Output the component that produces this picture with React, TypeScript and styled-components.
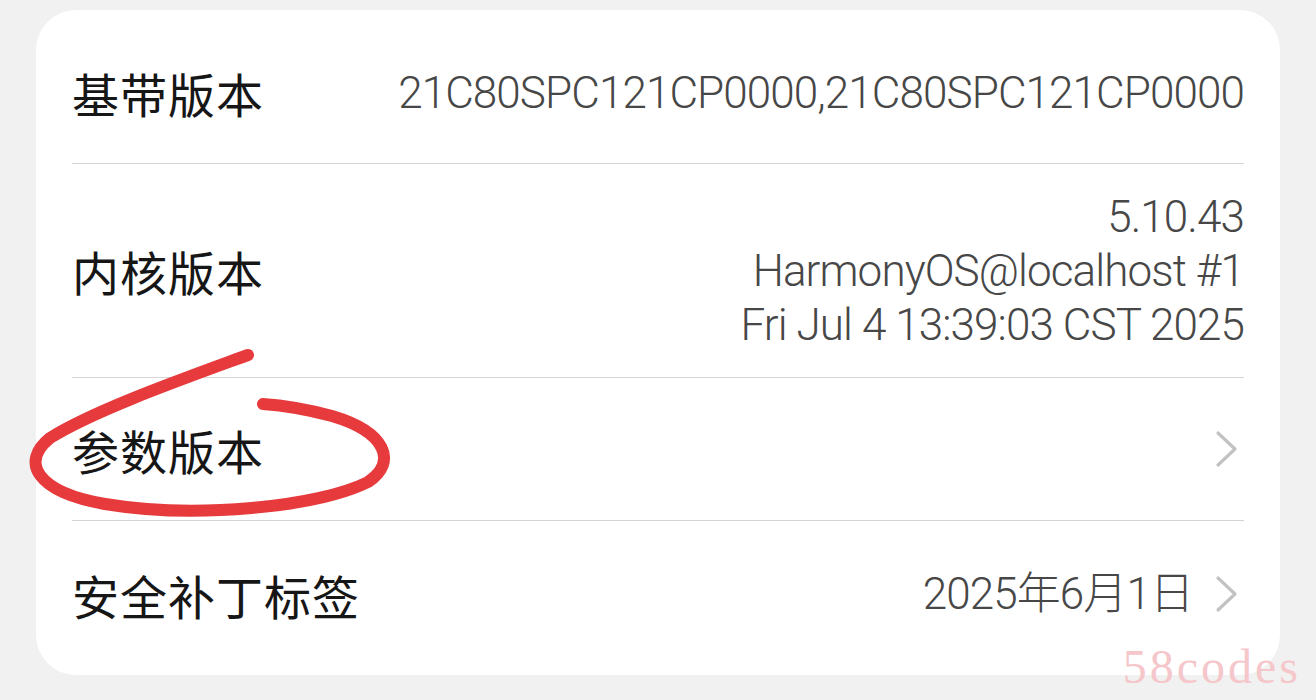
import React from "react";
import styled, { createGlobalStyle } from "styled-components";

const Global = createGlobalStyle`
  html, body { margin: 0; padding: 0; background: #f1f1f1; }
  body { font-family: Roboto, "Noto Sans CJK SC", sans-serif; }
`;

const Page = styled.div`
  position: relative;
  width: 1316px;
  height: 700px;
  box-sizing: border-box;
  padding: 10px 36px 25px 36px;
  background: #f1f1f1;
  overflow: hidden;
`;

const Card = styled.div`
  background: #ffffff;
  border-radius: 40px;
  height: 665px;
  box-sizing: border-box;
  padding: 12px 36px 0 36px;
  display: flex;
  flex-direction: column;
`;

const Row = styled.div<{ $h: number; $last?: boolean }>`
  display: flex;
  align-items: center;
  justify-content: space-between;
  min-height: ${(p) => p.$h}px;
  box-sizing: border-box;
  border-bottom: ${(p) => (p.$last ? "none" : "1.5px solid #d4d4d4")};
`;

const Label = styled.div`
  font-family: "Noto Sans CJK SC", sans-serif;
  font-size: 47px;
  color: #161616;
  letter-spacing: 1px;
  white-space: nowrap;
`;

const Right = styled.div`
  display: flex;
  align-items: center;
  gap: 22px;
  padding-right: 5px;
`;

const Value = styled.div`
  font-family: Roboto, "Noto Sans CJK SC", sans-serif;
  font-weight: 300;
  font-size: 44px;
  line-height: 54px;
  color: #474747;
  text-align: right;
  white-space: nowrap;
  letter-spacing: -0.9px;
`;

const Chevron = styled.svg`
  width: 24px;
  height: 38px;
  flex: none;
`;

const Circle = styled.svg`
  position: absolute;
  left: 0;
  top: 0;
  width: 1316px;
  height: 700px;
  pointer-events: none;
`;

const Watermark = styled.div`
  position: absolute;
  right: 15px;
  bottom: 6px;
  font-family: "Liberation Serif", serif;
  font-size: 48px;
  letter-spacing: 3px;
  color: #f5c6ca;
`;

const Arrow = () => (
  <Chevron viewBox="0 0 24 38">
    <polyline
      points="3,3 20,19 3,35"
      fill="none"
      stroke="#c2c2c2"
      strokeWidth="3.2"
      strokeLinecap="round"
      strokeLinejoin="round"
    />
  </Chevron>
);

export default function App() {
  return (
    <Page>
      <Global />
      <Card>
        <Row $h={142}>
          <Label>基带版本</Label>
          <Value>21C80SPC121CP0000,21C80SPC121CP0000</Value>
        </Row>
        <Row $h={214}>
          <Label>内核版本</Label>
          <Value>
            5.10.43
            <br />
            HarmonyOS@localhost #1
            <br />
            Fri Jul 4 13:39:03 CST 2025
          </Value>
        </Row>
        <Row $h={143}>
          <Label>参数版本</Label>
          <Right>
            <Arrow />
          </Right>
        </Row>
        <Row $h={146} $last>
          <Label>安全补丁标签</Label>
          <Right>
            <Value>2025年6月1日</Value>
            <Arrow />
          </Right>
        </Row>
      </Card>
      <Circle viewBox="0 0 1316 700">
        <path
          d="M248,355 C180,380 95,410 50,438 C20,462 36,492 105,504 C195,519 318,507 368,482 C398,462 386,432 332,416 C302,408 278,405 263,404"
          fill="none"
          stroke="#e63a3c"
          strokeWidth="12"
          strokeLinecap="round"
          strokeLinejoin="round"
        />
      </Circle>
      <Watermark>58codes</Watermark>
    </Page>
  );
}
